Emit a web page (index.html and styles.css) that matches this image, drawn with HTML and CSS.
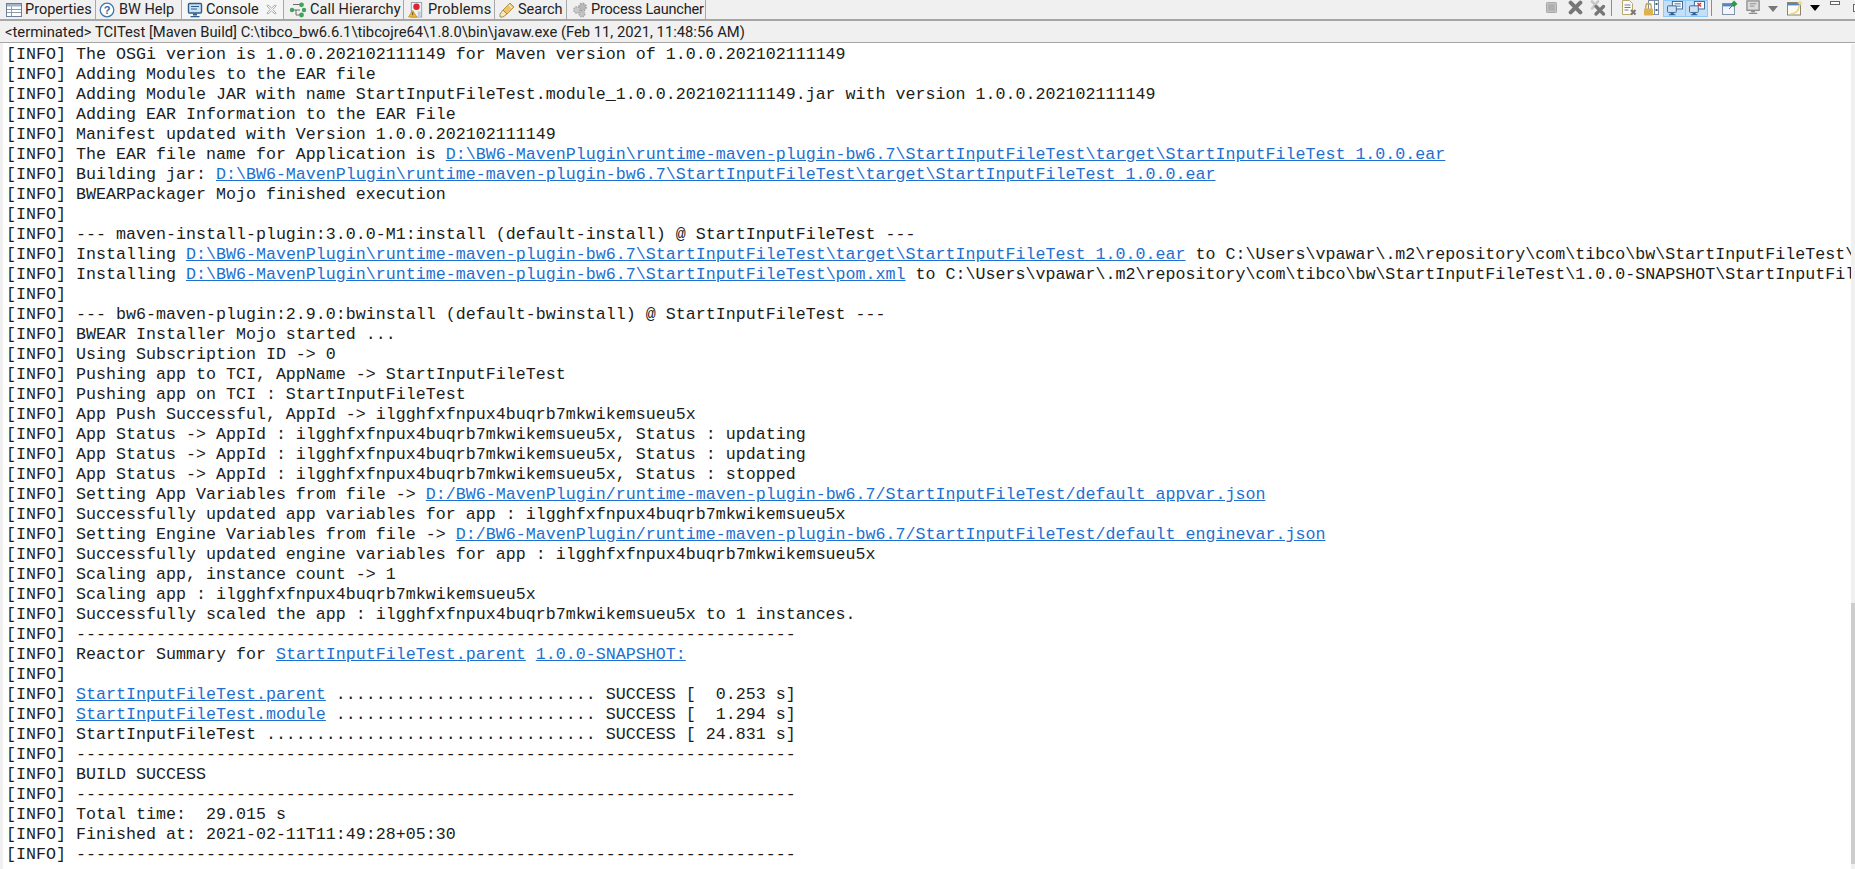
FILE: index.html
```html
<!DOCTYPE html>
<html lang="en">
<head>
<meta charset="utf-8">
<title>Console</title>
<link rel="stylesheet" href="styles.css">
</head>
<body>
<div class="view">
  <header class="tabbar">
    <nav class="tabs">
      <div class="tab tab-properties">
        <svg class="ticon" viewBox="0 0 16 16"><rect x="0.5" y="1.5" width="15" height="13" fill="#fff" stroke="#6d7f95"/><rect x="1" y="2" width="14" height="2.5" fill="#9fb4cc"/><path d="M5.5 4.5v10M1 7.5h14M1 10.5h14" stroke="#8a9bb0" fill="none"/></svg>
        <span>Properties</span>
      </div>
      <div class="tab tab-help">
        <svg class="ticon" viewBox="0 0 16 16"><circle cx="8" cy="8" r="6.8" fill="#fff" stroke="#3f76ab" stroke-width="1.3"/><text class="qmark" x="8" y="12" text-anchor="middle">?</text></svg>
        <span>BW Help</span>
      </div>
      <div class="tab tab-console">
        <svg class="ticon" viewBox="0 0 16 16"><rect x="1.5" y="1.5" width="13" height="9.5" rx="1" fill="#cfe0f0" stroke="#2f5f8f" stroke-width="1.4"/><path d="M4 4.5h8M4 7h6" stroke="#2f5f8f"/><path d="M6 11.5h4v2H6zM3.5 14h9v1.2h-9z" fill="#2f5f8f"/></svg>
        <span>Console</span>
        <svg class="tclose" viewBox="0 0 12 12"><path d="M2 1l4 3.5L10 1l1 1-3.5 4L11 10l-1 1-4-3.5L2 11l-1-1 3.5-4L1 2z" fill="#fff" stroke="#8b8b8b" stroke-width="0.8"/></svg>
      </div>
      <div class="tab tab-hierarchy">
        <svg class="ticon wide" viewBox="0 0 18 16"><path d="M4 2.5h7M4 8h3v5h4M7 8h4" stroke="#6b6b6b" fill="none"/><circle cx="3" cy="8" r="2.2" fill="#3fa45b"/><circle cx="12.5" cy="2.8" r="2.4" fill="#3fa45b"/><circle cx="15" cy="8" r="2.2" fill="#3fa45b"/><circle cx="12.5" cy="13" r="2.4" fill="#3fa45b"/></svg>
        <span>Call Hierarchy</span>
      </div>
      <div class="tab tab-problems">
        <svg class="ticon" viewBox="0 0 16 17"><rect x="3" y="0.5" width="11" height="15.5" fill="#eef1f5" stroke="#93a1b3"/><circle cx="8.5" cy="5" r="3.4" fill="#d9262c"/><path d="M10 10h3v5h-3z" fill="#c0ccd8"/><path d="M4.5 9L9 16H0z" fill="#eeb83a" stroke="#a97c16" stroke-width="0.6"/><path d="M4.5 11v3" stroke="#5a4208"/></svg>
        <span>Problems</span>
      </div>
      <div class="tab tab-search">
        <svg class="ticon" viewBox="0 0 16 16"><path d="M11 1l4 4-7 7-4-4z" fill="#efc468" stroke="#a78433" stroke-width="0.8"/><path d="M4 8l4 4-4 3H1v-3z" fill="#f7e6b8" stroke="#8d7a4a" stroke-width="0.8"/><path d="M10 3l3 3" stroke="#fff"/></svg>
        <span>Search</span>
      </div>
      <div class="tab tab-launcher">
        <svg class="ticon" viewBox="0 0 16 16"><circle cx="10.5" cy="5" r="3.6" fill="#b9b9b9" stroke="#a0a0a0" stroke-width="1.6" stroke-dasharray="1.6 1.2"/><circle cx="5" cy="8" r="3.2" fill="#c9c9c9" stroke="#aaa" stroke-width="1.5" stroke-dasharray="1.5 1.1"/><circle cx="10" cy="12" r="2.8" fill="#c4c4c4" stroke="#a8a8a8" stroke-width="1.4" stroke-dasharray="1.4 1"/></svg>
        <span>Process Launcher</span>
      </div>
    </nav>
    <div class="toolbar">
      <svg class="tool t-stop" viewBox="0 0 12 12"><rect x="0.5" y="0.5" width="11" height="11" rx="1" fill="#c2c2c2" stroke="#a2a2a2"/><rect x="2.5" y="2.5" width="7" height="7" fill="#aeaeae"/></svg>
      <svg class="tool t-remove" viewBox="0 0 14 14"><path d="M2.5 2.5l9 9M11.5 2.5l-9 9" stroke="#777" stroke-width="3.8" stroke-linecap="round"/></svg>
      <svg class="tool t-removeall" viewBox="0 0 16 16"><path d="M2 1.5l7 7M8 1.5l-6 7" stroke="#c8c8c8" stroke-width="2.6" stroke-linecap="round"/><path d="M6 6.5l7.5 7.5M13.5 6.5L6 14" stroke="#777" stroke-width="3.2" stroke-linecap="round"/></svg>
      <i class="sep sep-a"></i>
      <svg class="tool t-clear" viewBox="0 0 16 16"><path d="M1.5 0.5h7l3 3v11h-10z" fill="#fffdf3" stroke="#b6a777"/><path d="M3.5 5h6M3.5 7.5h6M3.5 10h4" stroke="#5d80b5"/><path d="M10 10l4.5 4.5M14.5 10L10 14.5" stroke="#777" stroke-width="2"/></svg>
      <svg class="tool t-lock" viewBox="0 0 16 16"><rect x="5.5" y="0.5" width="10" height="14" fill="#fff" stroke="#7d8fa3"/><path d="M11.5 1v13" stroke="#7d8fa3"/><rect x="12.5" y="3" width="2" height="2" fill="#47607f"/><rect x="12.5" y="9" width="2" height="2" fill="#47607f"/><path d="M2.8 9V6.2a2.7 2.7 0 015.4 0V9" fill="none" stroke="#c9a24b" stroke-width="1.3"/><rect x="1" y="8.5" width="9" height="7" rx="1" fill="#dcb24f"/></svg>
      <div class="toggles">
        <span class="toggle"><svg viewBox="0 0 18 17"><rect x="6" y="0.5" width="11.5" height="8.5" fill="#fff" stroke="#2f5f8f"/><path d="M8.5 3.2h7M8.5 5.8h7" stroke="#2f5f8f"/><rect x="0.5" y="5.5" width="10" height="7.5" rx="1" fill="#cfe0f0" stroke="#2f5f8f"/><path d="M4 13.5h3.5v1.5H4zM2 15h7.5v1.2H2z" fill="#2f5f8f"/></svg></span>
        <span class="toggle"><svg viewBox="0 0 18 17"><rect x="6" y="0.5" width="11.5" height="8.5" fill="#fff" stroke="#2f5f8f"/><path d="M9.5 2.2l4 4M13.5 2.2l-4 4" stroke="#e0363c" stroke-width="1.8"/><rect x="0.5" y="5.5" width="10" height="7.5" rx="1" fill="#cfe0f0" stroke="#2f5f8f"/><path d="M4 13.5h3.5v1.5H4zM2 15h7.5v1.2H2z" fill="#2f5f8f"/></svg></span>
      </div>
      <i class="sep sep-b"></i>
      <svg class="tool t-pin" viewBox="0 0 16 16"><rect x="0.5" y="3.5" width="12" height="11" fill="#f2f6fa" stroke="#8293a6"/><rect x="1" y="4" width="11" height="2.4" fill="#4f86c6"/><path d="M7 9l3-3" stroke="#666"/><path d="M9 4l3-3.5 3.5 3.5L12 7z" fill="#2f9a44"/></svg>
      <svg class="tool t-monitor" viewBox="0 0 16 16"><rect x="1" y="1" width="13" height="10" fill="#dcdcdc" stroke="#8c8c8c" stroke-width="1.4"/><path d="M4 4h7M4 6.5h5" stroke="#8c8c8c"/><path d="M5.5 11.5h4V13h-4zM3 13.5h9V15H3z" fill="#8c8c8c"/></svg>
      <svg class="tool t-arrow" viewBox="0 0 10 6"><path d="M0 0h10L5 6z" fill="#777"/></svg>
      <svg class="tool t-new" viewBox="0 0 16 16"><rect x="0.5" y="2.5" width="13" height="12.5" fill="#fbfbf4" stroke="#8d836a"/><rect x="1" y="3" width="12" height="2.4" fill="#4f86c6"/><path d="M3 14c5 0 9-3 9-8" fill="none" stroke="#e8d488" stroke-width="1.6"/><path d="M13 0l1 2 2 1-2 1-1 2-1-2-2-1 2-1z" fill="#efd98a"/></svg>
      <svg class="tool t-arrow2" viewBox="0 0 10 6"><path d="M0 0h10L5 6z" fill="#000"/></svg>
      <span class="minimize"></span>
      <span class="maximize"></span>
    </div>
  </header>
  <div class="infobar">&lt;terminated&gt; TCITest [Maven Build] C:\tibco_bw6.6.1\tibcojre64\1.8.0\bin\javaw.exe (Feb 11, 2021, 11:48:56 AM)</div>
  <main class="console">
    <div class="log">
      <div class="row">[INFO] The OSGi verion is 1.0.0.202102111149 for Maven version of 1.0.0.202102111149</div>
      <div class="row">[INFO] Adding Modules to the EAR file</div>
      <div class="row">[INFO] Adding Module JAR with name StartInputFileTest.module_1.0.0.202102111149.jar with version 1.0.0.202102111149</div>
      <div class="row">[INFO] Adding EAR Information to the EAR File</div>
      <div class="row">[INFO] Manifest updated with Version 1.0.0.202102111149</div>
      <div class="row">[INFO] The EAR file name for Application is <a>D:\BW6-MavenPlugin\runtime-maven-plugin-bw6.7\StartInputFileTest\target\StartInputFileTest_1.0.0.ear</a></div>
      <div class="row">[INFO] Building jar: <a>D:\BW6-MavenPlugin\runtime-maven-plugin-bw6.7\StartInputFileTest\target\StartInputFileTest_1.0.0.ear</a></div>
      <div class="row">[INFO] BWEARPackager Mojo finished execution</div>
      <div class="row">[INFO]</div>
      <div class="row">[INFO] --- maven-install-plugin:3.0.0-M1:install (default-install) @ StartInputFileTest ---</div>
      <div class="row">[INFO] Installing <a>D:\BW6-MavenPlugin\runtime-maven-plugin-bw6.7\StartInputFileTest\target\StartInputFileTest_1.0.0.ear</a> to C:\Users\vpawar\.m2\repository\com\tibco\bw\StartInputFileTest\1.0.0-SNAPSHOT\StartInputFileTest-1.0.0-SNAPSHOT.ear</div>
      <div class="row">[INFO] Installing <a>D:\BW6-MavenPlugin\runtime-maven-plugin-bw6.7\StartInputFileTest\pom.xml</a> to C:\Users\vpawar\.m2\repository\com\tibco\bw\StartInputFileTest\1.0.0-SNAPSHOT\StartInputFileTest-1.0.0-SNAPSHOT.pom</div>
      <div class="row">[INFO]</div>
      <div class="row">[INFO] --- bw6-maven-plugin:2.9.0:bwinstall (default-bwinstall) @ StartInputFileTest ---</div>
      <div class="row">[INFO] BWEAR Installer Mojo started ...</div>
      <div class="row">[INFO] Using Subscription ID -&gt; 0</div>
      <div class="row">[INFO] Pushing app to TCI, AppName -&gt; StartInputFileTest</div>
      <div class="row">[INFO] Pushing app on TCI : StartInputFileTest</div>
      <div class="row">[INFO] App Push Successful, AppId -&gt; ilgghfxfnpux4buqrb7mkwikemsueu5x</div>
      <div class="row">[INFO] App Status -&gt; AppId : ilgghfxfnpux4buqrb7mkwikemsueu5x, Status : updating</div>
      <div class="row">[INFO] App Status -&gt; AppId : ilgghfxfnpux4buqrb7mkwikemsueu5x, Status : updating</div>
      <div class="row">[INFO] App Status -&gt; AppId : ilgghfxfnpux4buqrb7mkwikemsueu5x, Status : stopped</div>
      <div class="row">[INFO] Setting App Variables from file -&gt; <a>D:/BW6-MavenPlugin/runtime-maven-plugin-bw6.7/StartInputFileTest/default_appvar.json</a></div>
      <div class="row">[INFO] Successfully updated app variables for app : ilgghfxfnpux4buqrb7mkwikemsueu5x</div>
      <div class="row">[INFO] Setting Engine Variables from file -&gt; <a>D:/BW6-MavenPlugin/runtime-maven-plugin-bw6.7/StartInputFileTest/default_enginevar.json</a></div>
      <div class="row">[INFO] Successfully updated engine variables for app : ilgghfxfnpux4buqrb7mkwikemsueu5x</div>
      <div class="row">[INFO] Scaling app, instance count -&gt; 1</div>
      <div class="row">[INFO] Scaling app : ilgghfxfnpux4buqrb7mkwikemsueu5x</div>
      <div class="row">[INFO] Successfully scaled the app : ilgghfxfnpux4buqrb7mkwikemsueu5x to 1 instances.</div>
      <div class="row">[INFO] ------------------------------------------------------------------------</div>
      <div class="row">[INFO] Reactor Summary for <a>StartInputFileTest.parent</a> <a>1.0.0-SNAPSHOT:</a></div>
      <div class="row">[INFO]</div>
      <div class="row">[INFO] <a>StartInputFileTest.parent</a> .......................... SUCCESS [  0.253 s]</div>
      <div class="row">[INFO] <a>StartInputFileTest.module</a> .......................... SUCCESS [  1.294 s]</div>
      <div class="row">[INFO] StartInputFileTest ................................. SUCCESS [ 24.831 s]</div>
      <div class="row">[INFO] ------------------------------------------------------------------------</div>
      <div class="row">[INFO] BUILD SUCCESS</div>
      <div class="row">[INFO] ------------------------------------------------------------------------</div>
      <div class="row">[INFO] Total time:  29.015 s</div>
      <div class="row">[INFO] Finished at: 2021-02-11T11:49:28+05:30</div>
      <div class="row">[INFO] ------------------------------------------------------------------------</div>
    </div>
    <div class="scrollbar"><div class="thumb"></div></div>
  </main>
</div>
</body>
</html>
```

FILE: styles.css
```css
* { box-sizing: border-box; }
html, body { margin: 0; height: 100%; overflow: hidden; background: #f0f0f0; }
.view { display: flex; flex-direction: column; width: 1855px; height: 869px; overflow: hidden; }

.tabbar { display: flex; justify-content: space-between; height: 21px; flex: none; border-bottom: 2px solid #a6a6a6; background: #f0f0f0; font-family: Roboto, "Liberation Sans", sans-serif; font-size: 14.5px; color: #222; }
.tabs { display: flex; height: 19px; }
.tab { display: flex; align-items: center; height: 19px; border-right: 1px solid #a8a8a8; white-space: nowrap; }
.ticon { width: 16px; height: 16px; flex: none; }
.ticon.wide { width: 18px; }
.tab-properties { width: 96px; padding-left: 6px; gap: 3px; }
.tab-help { width: 86px; padding-left: 3px; gap: 4px; }
.tab-console { width: 102px; padding-left: 5px; gap: 3px; background: #f6f6f6; }
.tab-hierarchy { width: 120px; padding-left: 5px; gap: 3px; letter-spacing: 0.1px; }
.tab-problems { width: 91px; padding-left: 4px; gap: 4px; letter-spacing: 0.2px; }
.tab-search { width: 72px; padding-left: 4px; gap: 3px; }
.tab-launcher { width: 139px; padding-left: 5px; gap: 3px; letter-spacing: -0.2px; }
.tclose { width: 11px; height: 11px; margin-left: auto; margin-right: 6px; flex: none; }
.qmark { font-family: "Liberation Sans", sans-serif; font-size: 11px; font-weight: 700; fill: #2f6aa3; }

.toolbar { display: flex; align-items: flex-start; height: 19px; flex: none; width: 309px; overflow: hidden; }
.tool { flex: none; display: block; }
.t-stop { width: 11px; height: 11px; margin: 2px 0 0 0; }
.t-remove { width: 15px; height: 15px; margin: 0 0 0 11px; }
.t-removeall { width: 16px; height: 16px; margin: 0 0 0 7px; }
.sep { display: block; width: 1px; height: 16px; background: #8d8d8d; flex: none; }
.sep-a { margin-left: 5px; }
.t-clear { width: 16px; height: 16px; margin-left: 9px; }
.t-lock { width: 16px; height: 16px; margin-left: 6px; }
.toggles { display: flex; margin-left: 4px; }
.toggle { display: flex; justify-content: center; width: 23px; height: 17px; background: #c4dff8; border: 1px solid #90c8f6; }
.toggle + .toggle { margin-left: -1px; }
.toggle svg { width: 18px; height: 15px; }
.sep-b { margin-left: 3px; }
.t-pin { width: 16px; height: 16px; margin-left: 10px; }
.t-monitor { width: 15px; height: 15px; margin-left: 8px; }
.t-arrow { width: 10px; height: 6px; margin: 6px 0 0 7px; }
.t-new { width: 16px; height: 16px; margin-left: 9px; }
.t-arrow2 { width: 10px; height: 6px; margin: 5px 0 0 7px; }
.minimize { display: block; width: 10px; height: 4px; margin: 1px 0 0 10px; border: 1px solid #666; background: #fff; flex: none; }
.maximize { display: block; width: 8px; height: 8px; margin: 4px 0 0 13px; border: 1px solid #666; background: #fff; flex: none; }

.infobar { height: 22px; flex: none; padding: 1px 0 0 5px; display: flex; align-items: center; border-bottom: 1px solid #a6a6a6; background: #f0f0f0; font-family: Roboto, "Liberation Sans", sans-serif; font-size: 14.75px; color: #222; white-space: pre; }

.console { position: relative; flex: 1; margin-left: 3px; background: #fff; overflow: hidden; padding-top: 2px; }
.log { padding-left: 3px; font-family: "Liberation Mono", "Courier New", monospace; font-size: 16.67px; line-height: 20px; color: #1c1c1c; }
.row { height: 20px; white-space: pre; }
.row a { color: #1f6fd0; text-decoration: underline; }
.scrollbar { position: absolute; top: 1px; right: 0; bottom: 0; width: 4px; background: #f0f0f0; }
.thumb { position: absolute; left: 0; right: 0; top: 559px; height: 261px; background: #cdcdcd; }
```
